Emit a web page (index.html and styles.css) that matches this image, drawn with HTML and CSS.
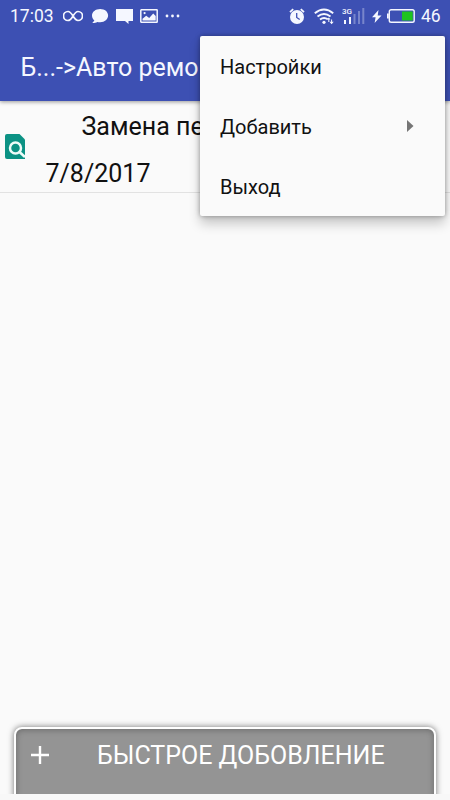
FILE: index.html
```html
<!DOCTYPE html>
<html lang="ru">
<head>
<meta charset="utf-8">
<title>Авто ремонт</title>
<link rel="stylesheet" href="styles.css">
</head>
<body>
<div class="screen">
  <header class="header">
    <div class="status">
      <div class="status-left">
        <span class="clock">17:03</span>
        <svg class="infinity" width="20" height="12" viewBox="0 0 20 12" fill="none" stroke="currentColor" stroke-width="1.700"><path d="M10 6C8 2.800 6.900 1.500 5 1.500a4.200 4.200 0 0 0 0 9C7.400 10.500 8.800 8 10 6S12.600 1.500 15 1.500a4.200 4.200 0 0 1 0 9C13.100 10.500 12 9.200 10 6Z"/></svg>
        <svg class="bubble" width="18" height="16" viewBox="0 0 18 16" fill="currentColor"><path d="M9.200 1C4.600 1 1 3.900 1 7.500c0 2 .9 3.700 2.400 4.900L1.300 15c2 .1 3.700-.3 5-1.100.9.200 1.900.3 2.900.3 4.500 0 7.900-3 7.900-6.700S13.700 1 9.200 1Z"/></svg>
        <svg class="message" width="17" height="16" viewBox="0 0 17 16" fill="currentColor"><path d="M0 1h17v12h-4.500v3L9 13H0Z"/></svg>
        <svg class="picture" width="18" height="14" viewBox="0 0 18 14"><rect x=".8" y=".8" width="16.400" height="12.400" rx=".5" fill="none" stroke="currentColor" stroke-width="1.500"/><path d="M2.500 11.500v-1.800l3.700-3 3 2.300 4-4.500 2.500 2.500v4.500Z" fill="currentColor"/><circle cx="4.600" cy="4.100" r="1.100" fill="currentColor"/></svg>
        <svg class="dots" width="15" height="4" viewBox="0 0 15 4" fill="currentColor"><circle cx="2" cy="2" r="1.400"/><circle cx="7.500" cy="2" r="1.400"/><circle cx="13" cy="2" r="1.400"/></svg>
      </div>
      <div class="status-right">
        <svg class="alarm" width="16" height="17" viewBox="0 0 16 17"><circle cx="8" cy="9" r="7" fill="currentColor"/><path d="M1 4.200 4.200 1.200M15 4.200 11.800 1.200" stroke="currentColor" stroke-width="1.800"/><path d="M7.700 5v4.500l3 2" fill="none" stroke="#3f51b5" stroke-width="1.300"/></svg>
        <svg class="wifi" width="21" height="17" viewBox="0 0 21 17" fill="none" stroke="currentColor" stroke-width="1.900"><path d="M.8 5.200Q10-2.200 19.200 5.200M3.500 8.500Q10 3.500 16.500 8.500M6 11.500Q10 8.500 13.800 11.300"/><circle cx="10" cy="14.300" r="1.600" fill="currentColor" stroke="none"/><path d="M14.800 14v-3.500M17.600 11.500v4" stroke-width="1"/><path d="m13.200 11.500 1.600-2 1.600 2ZM15.500 13.800l2.100 2.500 2.100-2.500Z" fill="currentColor" stroke="none"/></svg>
        <div class="signal">
          <span class="network">3G</span>
          <svg width="23" height="16" viewBox="0 0 23 16" fill="currentColor"><path d="M2 12h2v4H2ZM7 9h2v7H7Z"/><path d="M11.500 6h2v10h-2ZM16 3h2v13h-2ZM20.300 0h2v16h-2Z" opacity=".32"/></svg>
        </div>
        <svg class="bolt" width="10" height="13" viewBox="0 0 10 13" fill="currentColor"><path d="M6.500 0 0 7.300h3.600L2.600 13 9.500 5.500H5.700Z"/></svg>
        <svg class="battery" width="28" height="14" viewBox="0 0 28 14"><rect x="2.300" y=".8" width="24.900" height="12.400" rx="1.800" fill="none" stroke="currentColor" stroke-width="1.400"/><path d="M0 4.500h1.800v5H0Z" fill="currentColor"/><path d="M15 2.500h10.700v9H15Z" fill="#1fc41f"/></svg>
        <span class="charge">46</span>
      </div>
    </div>
    <h1 class="title">Б...-&gt;Авто ремо</h1>
  </header>

  <main class="content">
    <div class="record">
      <svg class="record-icon" width="20" height="25" viewBox="0 0 20 25"><path d="M2 0h12.500L20 5.500V25H2a2 2 0 0 1-2-2V2a2 2 0 0 1 2-2Z" fill="#0c9284"/><circle cx="10.500" cy="14" r="5.500" fill="none" stroke="#eefcf9" stroke-width="2.500"/><path d="m14.500 18 5.500 5" stroke="#eefcf9" stroke-width="2.600"/></svg>
      <div class="record-text">
        <div class="record-name">Замена пе</div>
        <div class="record-date">7/8/2017</div>
      </div>
    </div>
  </main>

  <footer class="footer">
    <button class="quick-add">
      <svg class="plus" width="18" height="18" viewBox="0 0 18 18" fill="none" stroke="currentColor" stroke-width="2.400"><path d="M9 0v18M0 9h18"/></svg>
      <span class="quick-label">БЫСТРОЕ ДОБОВЛЕНИЕ</span>
    </button>
  </footer>

  <nav class="menu">
    <div class="menu-item"><span>Настройки</span></div>
    <div class="menu-item"><span>Добавить</span><svg class="arrow" width="7" height="12" viewBox="0 0 7 12"><path d="M0 0 6.500 6 0 12Z" fill="#757575"/></svg></div>
    <div class="menu-item"><span>Выход</span></div>
  </nav>
</div>
</body>
</html>
```

FILE: styles.css
```css
* {
  box-sizing: border-box;
}

body {
  margin: 0;
  font-family: Roboto, "Noto Sans", sans-serif;
  color: #111;
}

.screen {
  position: relative;
  display: flex;
  flex-direction: column;
  width: 450px;
  height: 800px;
  overflow: hidden;
  background: #fafafa;
}

.header {
  height: 101px;
  background: #3d50b3;
  color: #f5f7ff;
  box-shadow: 0 1px 4px rgba(0, 0, 0, 0.4);
}

.status {
  display: flex;
  justify-content: space-between;
  height: 32px;
  padding: 0 10px;
}

.status-left,
.status-right {
  display: flex;
  align-items: center;
}

.status svg {
  display: block;
  flex: none;
}

.clock,
.charge {
  font-size: 17.5px;
  line-height: 32px;
}

.clock {
  width: 52.5px;
}

.bubble {
  margin-left: 8px;
}

.message {
  margin-left: 7px;
}

.picture {
  margin-left: 7px;
}

.dots {
  margin-left: 7px;
}

.wifi {
  margin-left: 9px;
}

.signal {
  display: grid;
  width: 23px;
  height: 16px;
  margin-left: 7px;
}

.signal > * {
  grid-area: 1 / 1;
}

.network {
  font-size: 8px;
  font-weight: 500;
  line-height: 7px;
}

.bolt {
  margin-left: 7px;
}

.battery {
  margin-left: 5px;
}

.charge {
  width: 19px;
  margin-left: 6px;
}

.title {
  margin: 0;
  padding: 0 20.5px;
  font-size: 25px;
  font-weight: 400;
  line-height: 71px;
  white-space: nowrap;
}

.content {
  flex: 1;
}

.record {
  display: flex;
  height: 92px;
  padding-left: 5px;
  border-bottom: 1px solid #e2e2e2;
}

.record-icon {
  flex: none;
  margin-top: 33px;
}

.record-text {
  padding: 2px 0 0 20.5px;
  font-size: 25px;
  line-height: 47px;
  white-space: nowrap;
}

.record-name {
  padding-left: 36px;
}

.footer {
  height: 85px;
  padding: 12px 14px 0;
  border-bottom: 6px solid #f8f8f8;
  overflow: hidden;
}

.quick-add {
  display: flex;
  align-items: flex-start;
  width: 422px;
  height: 90px;
  margin: 0;
  padding: 14px 0 0 15px;
  border: 2px solid #fff;
  border-radius: 8px;
  background: #949494;
  color: #fff;
  font: 400 25px/26px Roboto, "Noto Sans", sans-serif;
  white-space: nowrap;
  box-shadow: 0 0 6px rgba(0, 0, 0, 0.55), inset 0 1px 6px rgba(0, 0, 0, 0.28);
}

.plus {
  flex: none;
  margin-top: 3px;
}

.quick-label {
  margin-left: 48px;
}

.menu {
  position: absolute;
  top: 36px;
  left: 200px;
  width: 245px;
  height: 180px;
  border-radius: 2px;
  background: #fafafa;
  box-shadow: 0 8px 12px rgba(0, 0, 0, 0.2), 0 0 5px rgba(0, 0, 0, 0.35);
}

.menu-item {
  display: flex;
  align-items: center;
  justify-content: space-between;
  height: 60px;
  padding: 0 31px 0 20px;
  font-size: 20px;
}

.menu-item span {
  padding-top: 2px;
}
```
